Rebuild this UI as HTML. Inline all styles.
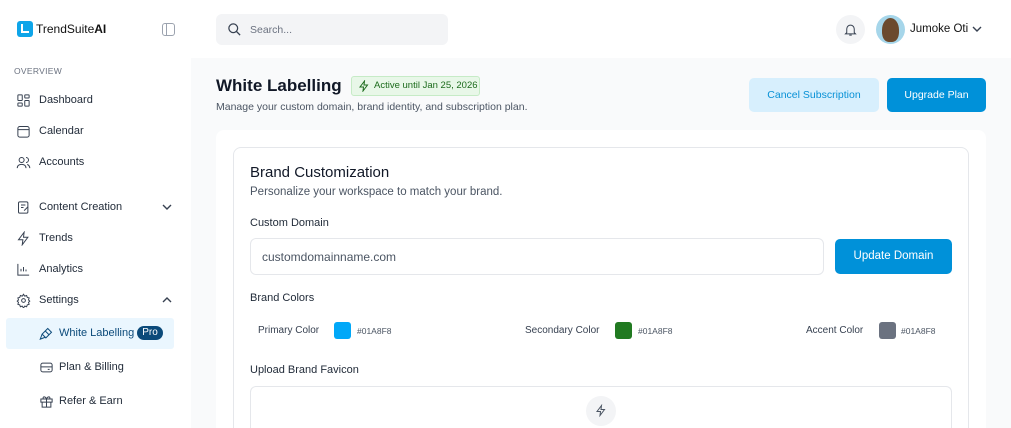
<!DOCTYPE html>
<html style="overflow:hidden;height:428px"><head><style>
*{box-sizing:border-box;margin:0;padding:0}
body{width:1011px;height:428px;overflow:hidden;font-family:"Liberation Sans",sans-serif;background:#fff;position:relative;color:#1f2937;line-height:1.2}
.abs{position:absolute}
.main{left:191px;top:58px;width:820px;height:370px;background:#f9fafb}
.nav{left:16px;font-size:11px;color:#1f2937;display:flex;align-items:center}
.nav svg{width:15px;height:15px;margin-right:8px;stroke:#374151;fill:none;stroke-width:1.6;flex:none}
</style></head><body>
<!-- sidebar -->
<div class="abs" style="left:17px;top:21px;width:16px;height:16px;background:#0ea5e9;border-radius:3px"></div>
<div class="abs" style="left:21px;top:24px;width:8px;height:9px;border-left:2.5px solid #fff;border-bottom:2.5px solid #fff"></div>
<div class="abs" style="left:36px;top:22px;font-size:12px;color:#111">TrendSuite<b>AI</b></div>
<div class="abs" style="left:162px;top:23px;width:13px;height:13px;border:1.4px solid #9ca3af;border-radius:3px"></div>
<div class="abs" style="left:166px;top:23px;width:1.4px;height:13px;background:#9ca3af"></div>
<div class="abs" style="left:14px;top:66px;font-size:8.5px;color:#6b7280;letter-spacing:.3px">OVERVIEW</div>
<div class="abs nav" style="top:93px"><svg viewBox="0 0 24 24"><rect x="3" y="3" width="7" height="9" rx="1"/><rect x="14" y="3" width="7" height="5" rx="1"/><rect x="14" y="12" width="7" height="9" rx="1"/><rect x="3" y="16" width="7" height="5" rx="1"/></svg>Dashboard</div>
<div class="abs nav" style="top:124px"><svg viewBox="0 0 24 24"><rect x="3" y="4" width="18" height="17" rx="3"/><path d="M3 9h18"/></svg>Calendar</div>
<div class="abs nav" style="top:155px"><svg viewBox="0 0 24 24"><circle cx="9" cy="8" r="4"/><path d="M2 21c0-4 3-6 7-6s7 2 7 6M16 4a4 4 0 010 8M18 15c2 1 4 3 4 6"/></svg>Accounts</div>
<div class="abs nav" style="top:200px"><svg viewBox="0 0 24 24"><rect x="4" y="3" width="15" height="18" rx="2"/><path d="M8 8h7M8 12h4M13 17l6-6"/></svg>Content Creation</div>
<svg class="abs" style="left:161px;top:202px" width="12" height="10" viewBox="0 0 12 10"><path d="M2 3l4 4 4-4" stroke="#374151" stroke-width="1.4" fill="none"/></svg>
<div class="abs nav" style="top:231px"><svg viewBox="0 0 24 24"><path d="M13 2L4 14h7l-1 8 9-12h-7z"/></svg>Trends</div>
<div class="abs nav" style="top:262px"><svg viewBox="0 0 24 24"><path d="M3 3v18h18M8 15v-4M12 15V8M16 15v-3"/></svg>Analytics</div>
<div class="abs nav" style="top:293px"><svg viewBox="0 0 24 24"><circle cx="12" cy="12" r="3"/><path d="M12 2l2 3 3-1 1 3 3 1-1 3 2 2-2 2 1 3-3 1-1 3-3-1-2 3-2-3-3 1-1-3-3-1 1-3-2-2 2-2-1-3 3-1 1-3 3 1z"/></svg>Settings</div>
<svg class="abs" style="left:161px;top:295px" width="12" height="10" viewBox="0 0 12 10"><path d="M2 7l4-4 4 4" stroke="#374151" stroke-width="1.4" fill="none"/></svg>
<div class="abs" style="left:6px;top:318px;width:168px;height:31px;background:#eaf6fe;border-radius:3px"></div>
<div class="abs nav" style="left:39px;top:326px;color:#0b4a7a"><svg viewBox="0 0 24 24" style="stroke:#0b4a7a;margin-right:5px"><path d="M14 4l6 6-9 9-6-6zM5 13l-3 8 8-3M10 8l6 6"/></svg>White Labelling</div>
<div class="abs" style="left:137px;top:326px;width:26px;height:14px;background:#0b4a7a;color:#fff;border-radius:8px;font-size:10px;text-align:center;line-height:14px">Pro</div>
<div class="abs nav" style="left:39px;top:360px"><svg viewBox="0 0 24 24" style="margin-right:5px"><rect x="3" y="5" width="18" height="14" rx="3"/><path d="M3 11h18M14 15h3"/></svg>Plan &amp; Billing</div>
<div class="abs nav" style="left:39px;top:394px"><svg viewBox="0 0 24 24" style="margin-right:5px"><rect x="3" y="8" width="18" height="5"/><path d="M5 13v8h14v-8M12 8v13M12 8c-2-5-7-4-5 0M12 8c2-5 7-4 5 0"/></svg>Refer &amp; Earn</div>
<!-- header -->
<div class="abs" style="left:216px;top:14px;width:232px;height:31px;background:#f3f4f6;border-radius:6px"></div>
<svg class="abs" style="left:227px;top:22px" width="15" height="15" viewBox="0 0 24 24"><circle cx="10" cy="10" r="7" stroke="#374151" stroke-width="2" fill="none"/><path d="M15 15l6 6" stroke="#374151" stroke-width="2"/></svg>
<div class="abs" style="left:250px;top:24px;font-size:10.5px;color:#6b7280">Search...</div>
<div class="abs" style="left:836px;top:15px;width:29px;height:29px;border-radius:50%;background:#f3f4f6"></div>
<svg class="abs" style="left:843px;top:22px" width="15" height="15" viewBox="0 0 24 24"><path d="M6 17V11a6 6 0 0112 0v6l2 2H4zM10 21h4" stroke="#374151" stroke-width="1.6" fill="none"/></svg>
<div class="abs" style="left:876px;top:15px;width:29px;height:29px;border-radius:50%;background:#a6d6ea"></div>
<div class="abs" style="left:882px;top:18px;width:17px;height:24px;border-radius:50% 50% 40% 40%;background:#6b4a2e"></div>
<div class="abs" style="left:910px;top:23px;font-size:11.5px;color:#111">Jumoke Oti</div>
<svg class="abs" style="left:971px;top:24px" width="12" height="10" viewBox="0 0 12 10"><path d="M2 3l4 4 4-4" stroke="#374151" stroke-width="1.4" fill="none"/></svg>
<!-- main -->
<div class="abs main"></div>
<div class="abs" style="left:216px;top:76px;font-size:17px;font-weight:bold;color:#111827">White Labelling</div>
<div class="abs" style="left:351px;top:76px;width:129px;height:20px;background:#e8f7e8;border:1px solid #c6ebc6;border-radius:3px;font-size:9.5px;color:#1c6b1c;line-height:18px;padding-left:22px">Active until Jan 25, 2026</div>
<svg class="abs" style="left:358px;top:80px" width="12" height="12" viewBox="0 0 24 24"><path d="M13 2L4 14h7l-1 8 9-12h-7z" stroke="#1c6b1c" stroke-width="2" fill="none"/></svg>
<div class="abs" style="left:216px;top:101px;font-size:10.5px;color:#4b5563">Manage your custom domain, brand identity, and subscription plan.</div>
<div class="abs" style="left:749px;top:78px;width:130px;height:34px;background:#d7effd;border-radius:5px;color:#0891d6;font-size:10.5px;text-align:center;line-height:34px">Cancel Subscription</div>
<div class="abs" style="left:887px;top:78px;width:99px;height:34px;background:#0091d9;border-radius:5px;color:#fff;font-size:10.5px;text-align:center;line-height:34px">Upgrade Plan</div>
<div class="abs" style="left:216px;top:130px;width:770px;height:298px;background:#fff;border-radius:8px 8px 0 0"></div>
<div class="abs" style="left:233px;top:147px;width:736px;height:290px;background:#fff;border:1px solid #e5e7eb;border-radius:8px"></div>
<div class="abs" style="left:250px;top:164px;font-size:15px;color:#111827">Brand Customization</div>
<div class="abs" style="left:250px;top:186px;font-size:11.5px;color:#4b5563">Personalize your workspace to match your brand.</div>
<div class="abs" style="left:250px;top:217px;font-size:11px">Custom Domain</div>
<div class="abs" style="left:250px;top:238px;width:574px;height:37px;border:1px solid #e5e7eb;border-radius:6px;font-size:12px;color:#4b5563;line-height:36px;padding-left:11px">customdomainname.com</div>
<div class="abs" style="left:835px;top:239px;width:117px;height:35px;background:#0091d9;border-radius:5px;color:#fff;font-size:11.5px;text-align:center;line-height:35px">Update Domain</div>
<div class="abs" style="left:250px;top:292px;font-size:11px">Brand Colors</div>
<div class="abs" style="left:258px;top:325px;font-size:10px;color:#374151">Primary Color</div>
<div class="abs" style="left:334px;top:322px;width:17px;height:17px;background:#01a8f8;border-radius:3px"></div>
<div class="abs" style="left:357px;top:326px;font-size:8.5px;color:#4b5563">#01A8F8</div>
<div class="abs" style="left:525px;top:325px;font-size:10px;color:#374151">Secondary Color</div>
<div class="abs" style="left:615px;top:322px;width:17px;height:17px;background:#217a21;border-radius:3px"></div>
<div class="abs" style="left:638px;top:326px;font-size:8.5px;color:#4b5563">#01A8F8</div>
<div class="abs" style="left:806px;top:325px;font-size:10px;color:#374151">Accent Color</div>
<div class="abs" style="left:879px;top:322px;width:17px;height:17px;background:#6b7280;border-radius:3px"></div>
<div class="abs" style="left:901px;top:326px;font-size:8.5px;color:#4b5563">#01A8F8</div>
<div class="abs" style="left:250px;top:364px;font-size:11px">Upload Brand Favicon</div>
<div class="abs" style="left:250px;top:386px;width:702px;height:42px;border:1px solid #e5e7eb;border-bottom:none;border-radius:6px 6px 0 0"></div>
<div class="abs" style="left:586px;top:396px;width:30px;height:30px;border-radius:50%;background:#f3f4f6"></div>
<svg class="abs" style="left:595px;top:404px" width="12" height="13" viewBox="0 0 24 24"><path d="M13 2L4 14h7l-1 8 9-12h-7z" stroke="#4b5563" stroke-width="2" fill="none"/></svg>
</body></html>
